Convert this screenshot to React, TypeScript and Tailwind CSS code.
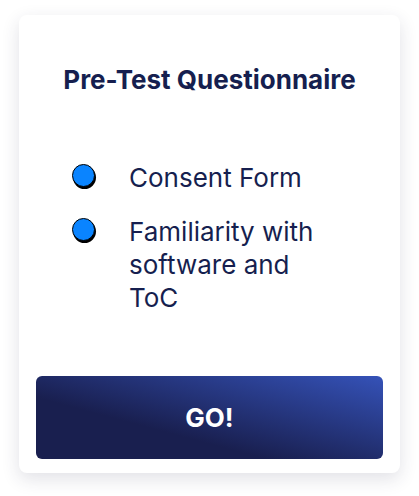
import React from 'react';

const items: string[] = ['Consent Form', 'Familiarity with software and ToC'];

const Bullet: React.FC = () => (
  <span className="mt-[3px] block h-[23px] w-[23px] shrink-0 rounded-full border border-black bg-[#0a84ff] shadow-[1px_2px_0_#000]" />
);

const App: React.FC = () => {
  return (
    <div className="min-h-[496px] bg-white pt-[15px]" style={{ fontFamily: 'Inter, "Noto Sans", sans-serif' }}>
      <div className="mx-auto flex h-[458px] w-[381px] flex-col rounded-lg bg-white px-[17px] pb-[14px] shadow-[0_6px_18px_rgba(40,40,80,0.14)]">
        <h1 className="mt-[50px] text-center text-[26px] font-bold leading-[30px] text-[#161f4f]">
          Pre-Test Questionnaire
        </h1>

        <ul className="mt-[66px] flex flex-col gap-[21px] pl-[36px]">
          {items.map((item) => (
            <li key={item} className="flex items-start gap-[34px]">
              <Bullet />
              <span className="w-[200px] text-[26px] leading-[33px] text-[#161f4f]">{item}</span>
            </li>
          ))}
        </ul>

        <button className="mt-auto h-[83px] w-full rounded-md bg-[linear-gradient(15deg,#191f4f_35%,#3552b8_100%)] text-[26px] font-bold text-white">
          GO!
        </button>
      </div>
    </div>
  );
};

export default App;
